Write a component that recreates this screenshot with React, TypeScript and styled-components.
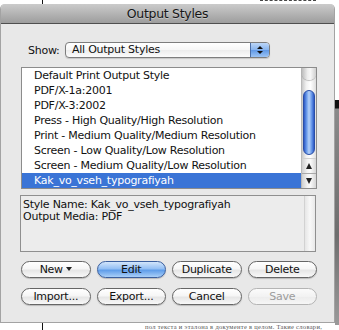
import React from "react";
import styled, { createGlobalStyle, css } from "styled-components";

const GlobalStyle = createGlobalStyle`
  html, body {
    margin: 0;
    padding: 0;
    background: #fff;
  }
  body {
    width: 339px;
    height: 330px;
    overflow: hidden;
    font-family: "DejaVu Sans", "Liberation Sans", sans-serif;
    -webkit-font-smoothing: antialiased;
  }
`;

const Desktop = styled.div`
  position: relative;
  width: 339px;
  height: 330px;
  padding-top: 4px;
  box-sizing: border-box;
  background: #fff;
  overflow: hidden;
`;

/* document behind the dialog */
const PageRule = styled.div`
  position: absolute;
  left: 42px;
  top: 0;
  width: 1px;
  height: 330px;
  background: #111;
`;

const TopDashes = styled.div`
  position: absolute;
  left: 260px;
  top: 0;
  width: 56px;
  border-top: 1px dashed #444;
`;

const SideStripe = styled.div`
  position: absolute;
  left: 335px;
  top: 100px;
  width: 4px;
  height: 225px;
  background: linear-gradient(#111 0, #111 8px, #8a8a8a 9px, #6e6e6e 60%, #9a9a9a);
`;

const BottomText = styled.div`
  position: absolute;
  left: 145px;
  top: 323px;
  white-space: nowrap;
  font-family: "Liberation Serif", serif;
  font-size: 6.5px;
  line-height: 7px;
  letter-spacing: 0.3px;
  color: #555;
`;

const Window = styled.div`
  position: relative;
  z-index: 1;
  width: 335px;
  height: 319px;
  box-sizing: border-box;
  background: #e8e8e8;
  border: 1px solid #a3a3a3;
  border-top: none;
  border-radius: 5px 5px 0 0;
  overflow: hidden;
`;

const TitleBar = styled.div`
  height: 19px;
  display: flex;
  align-items: center;
  justify-content: center;
  background: linear-gradient(#cbcbcb, #b4b4b4 50%, #9d9d9d);
  border-bottom: 1px solid #4f4f4f;
  font-size: 12.5px;
  letter-spacing: -0.3px;
  color: #161616;
  text-shadow: 0 1px 0 rgba(255, 255, 255, 0.35);
`;

const Body = styled.div`
  padding: 18px 17px 0 20px;
  font-size: 11px;
  letter-spacing: -0.25px;
  color: #111;
`;

const ShowRow = styled.div`
  display: flex;
  align-items: center;
  height: 16px;
  padding-left: 7px;
  gap: 6px;
`;

const Label = styled.span`
  width: 31px;
`;

const Popup = styled.div`
  width: 205px;
  height: 16px;
  box-sizing: border-box;
  display: flex;
  border: 1px solid #7d7d7d;
  border-radius: 4px;
  background: linear-gradient(#ffffff, #f6f6f6 50%, #ececec 51%, #fbfbfb);
  box-shadow: 0 1px 1px rgba(0, 0, 0, 0.15);
  overflow: hidden;
`;

const PopupText = styled.span`
  flex: 1;
  padding-left: 6px;
  line-height: 14px;
`;

const Stepper = styled.span`
  width: 18px;
  display: flex;
  flex-direction: column;
  align-items: center;
  justify-content: center;
  gap: 2px;
  border-left: 1px solid #4b6ea6;
  background: linear-gradient(#bcd6f7, #86b3ee 50%, #5f98e6 51%, #9cc4f4);
`;

const Tri = styled.span<{ $down?: boolean }>`
  width: 0;
  height: 0;
  border-left: 3px solid transparent;
  border-right: 3px solid transparent;
  ${(p) =>
    p.$down
      ? css`border-top: 3px solid #111;`
      : css`border-bottom: 3px solid #111;`}
`;

const ListBox = styled.div`
  margin-top: 9px;
  height: 122px;
  box-sizing: border-box;
  display: flex;
  border: 1px solid #8c8c8c;
  background: #fff;
`;

const Rows = styled.div`
  flex: 1;
  overflow: hidden;
`;

const Row = styled.div<{ $selected?: boolean }>`
  height: 15px;
  line-height: 15px;
  padding-left: 12px;
  white-space: nowrap;
  ${(p) =>
    p.$selected &&
    css`
      background: #3a74d6;
      color: #fff;
    `}
`;

const Scrollbar = styled.div`
  width: 14px;
  display: flex;
  flex-direction: column;
  border-left: 1px solid #b9b9b9;
  background: linear-gradient(to right, #c9c9c9, #f1f1f1 30%, #ffffff 60%, #dedede);
`;

const Cap = styled.div`
  height: 12px;
  border-radius: 0 0 7px 7px / 0 0 6px 6px;
  background: linear-gradient(to right, #bdbdbd, #eeeeee 40%, #f7f7f7 60%, #cfcfcf);
  box-shadow: 0 1px 1px rgba(0, 0, 0, 0.25);
`;

const Thumb = styled.div`
  margin: 10px 1px 3px;
  height: 66px;
  box-sizing: border-box;
  border: 1px solid #2a4ea6;
  border-radius: 6px;
  background: linear-gradient(to right, #2c59c6, #6f9fec 28%, #b7d2f8 50%, #6e9deb 74%, #2c59c6);
`;

const Arrow = styled.div<{ $down?: boolean }>`
  height: 14px;
  display: flex;
  align-items: center;
  justify-content: center;
  background: linear-gradient(to right, #d0d0d0, #f4f4f4 40%, #fafafa 60%, #d6d6d6);
  border-top: 1px solid ${(p) => (p.$down ? "#a9a9a9" : "#d0d0d0")};
`;

const ArrowTri = styled.span<{ $down?: boolean }>`
  width: 0;
  height: 0;
  border-left: 3.5px solid transparent;
  border-right: 3.5px solid transparent;
  ${(p) =>
    p.$down
      ? css`border-top: 6px solid #222;`
      : css`border-bottom: 6px solid #222;`}
`;

const InfoBox = styled.div`
  margin: 6px 1px 0 -1px;
  height: 57px;
  box-sizing: border-box;
  display: flex;
  border: 1px solid #8f8f8f;
  background: #ececec;
`;

const InfoText = styled.div`
  flex: 1;
  padding: 3px 0 0 2px;
  line-height: 12px;
`;

const InfoTrack = styled.div`
  width: 10px;
  border-left: 1px solid #d2d2d2;
  background: linear-gradient(to right, #e6e6e6, #f8f8f8 50%, #e9e9e9);
`;

const Buttons = styled.div`
  margin-top: 9px;
  display: grid;
  grid-template-columns: repeat(4, 1fr);
  column-gap: 6px;
  row-gap: 10px;
`;

const Button = styled.div<{ $variant?: "default" | "disabled" }>`
  height: 17px;
  box-sizing: border-box;
  display: flex;
  align-items: center;
  justify-content: center;
  gap: 3px;
  border: 1px solid #666;
  border-radius: 9px;
  background: linear-gradient(#ffffff, #f6f6f6 45%, #e6e6e6 55%, #f8f8f8);
  box-shadow: 0 1px 1px rgba(0, 0, 0, 0.2);
  color: #111;
  ${(p) =>
    p.$variant === "default" &&
    css`
      border-color: #3b5f9e;
      background: linear-gradient(#d2e5fb, #93bff4 45%, #5f9de9 55%, #a9cff8);
    `}
  ${(p) =>
    p.$variant === "disabled" &&
    css`
      border-color: #b4b4b4;
      color: #9c9c9c;
      background: linear-gradient(#fbfbfb, #f2f2f2 50%, #ececec 51%, #f6f6f6);
      box-shadow: none;
    `}
`;

const MenuTri = styled.span`
  width: 0;
  height: 0;
  margin-top: -2px;
  border-left: 3px solid transparent;
  border-right: 3px solid transparent;
  border-top: 4px solid #222;
`;

const styles = [
  "Default Print Output Style",
  "PDF/X-1a:2001",
  "PDF/X-3:2002",
  "Press - High Quality/High Resolution",
  "Print - Medium Quality/Medium Resolution",
  "Screen - Low Quality/Low Resolution",
  "Screen - Medium Quality/Low Resolution",
  "Kak_vo_vseh_typografiyah",
];

export default function App() {
  return (
    <Desktop>
      <GlobalStyle />
      <PageRule />
      <TopDashes />
      <SideStripe />
      <BottomText>пол текста и эталона в документе в целом. Такие словари,</BottomText>
      <Window>
        <TitleBar>Output Styles</TitleBar>
        <Body>
          <ShowRow>
            <Label>Show:</Label>
            <Popup>
              <PopupText>All Output Styles</PopupText>
              <Stepper>
                <Tri />
                <Tri $down />
              </Stepper>
            </Popup>
          </ShowRow>
          <ListBox>
            <Rows>
              {styles.map((s, i) => (
                <Row key={s} $selected={i === styles.length - 1}>
                  {s}
                </Row>
              ))}
            </Rows>
            <Scrollbar>
              <Cap />
              <Thumb />
              <Arrow>
                <ArrowTri />
              </Arrow>
              <Arrow $down>
                <ArrowTri $down />
              </Arrow>
            </Scrollbar>
          </ListBox>
          <InfoBox>
            <InfoText>
              Style Name: Kak_vo_vseh_typografiyah
              <br />
              Output Media: PDF
            </InfoText>
            <InfoTrack />
          </InfoBox>
          <Buttons>
            <Button>
              New
              <MenuTri />
            </Button>
            <Button $variant="default">Edit</Button>
            <Button>Duplicate</Button>
            <Button>Delete</Button>
            <Button>Import...</Button>
            <Button>Export...</Button>
            <Button>Cancel</Button>
            <Button $variant="disabled">Save</Button>
          </Buttons>
        </Body>
      </Window>
    </Desktop>
  );
}
